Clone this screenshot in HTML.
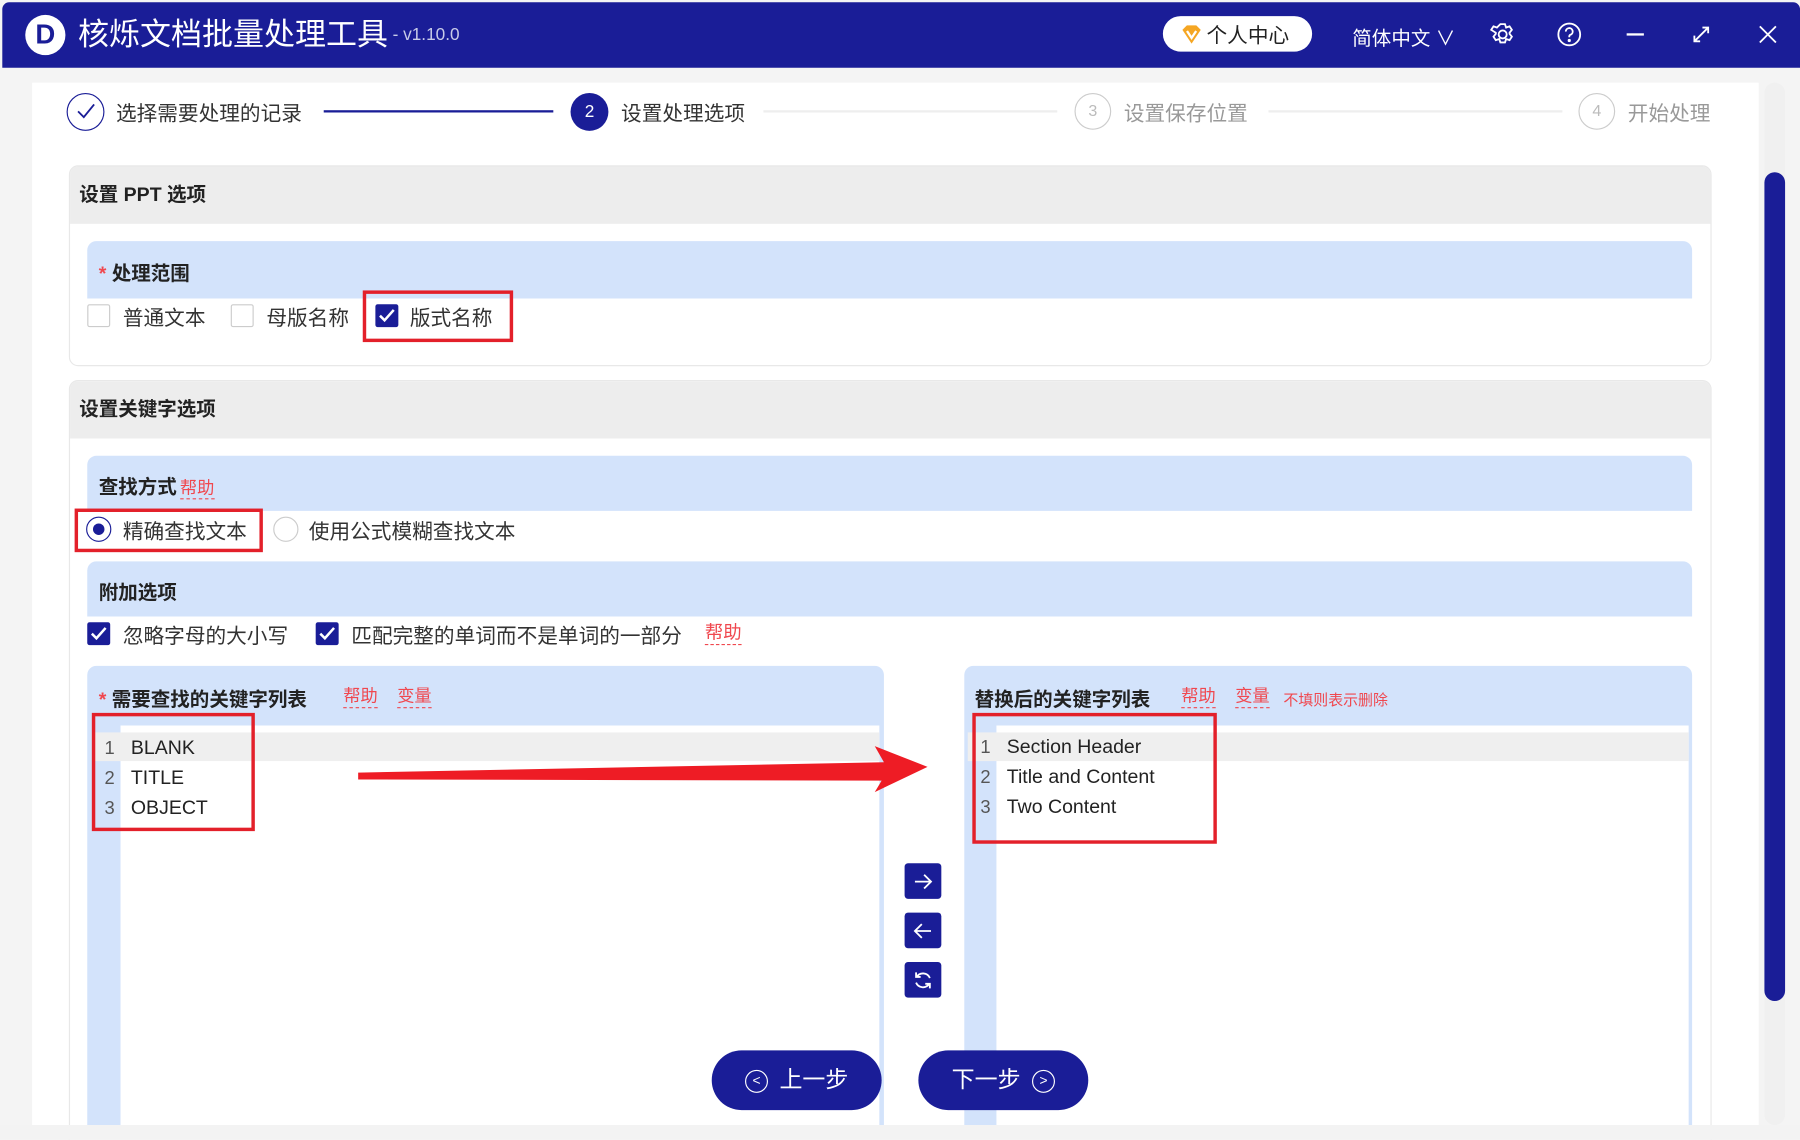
<!DOCTYPE html>
<html><head><meta charset="utf-8"><style>
*{box-sizing:border-box;margin:0;padding:0}
html,body{width:1800px;height:1140px;overflow:hidden;background:#f3f3f3}
body{font-family:"Liberation Sans","Noto Sans CJK SC",sans-serif;color:#333}
#w{position:absolute;left:0;top:0;width:1568px;height:993px;transform:scale(1.14796);transform-origin:0 0;background:#f4f4f4;overflow:hidden}
.a{position:absolute}
.tb{left:2px;top:2px;width:1566px;height:57px;background:#1a1d97;border-radius:6px 6px 0 0}
.w{color:#fff}
.step{font-size:18px;color:#333}
.circ{width:32px;height:32px;border-radius:50%;border:1.5px solid #ccc;text-align:center;line-height:29px;font-size:14px;color:#bbb}
.card{background:#fff;border:1px solid #e8e8e8;border-radius:8px;overflow:hidden}
.ch{background:#ededed;height:50px;font-weight:bold;font-size:17px;padding-left:8px;line-height:50px;color:#222}
.blue{background:#d3e3fb;border-radius:8px 8px 0 0}
.bt{font-weight:bold;font-size:17px;color:#222}
.cb{width:20px;height:20px;border:1px solid #ccc;border-radius:2px;background:#fff}
.cbk{width:20px;height:20px;border-radius:2px;background:#1a1d97}
.lbl{font-size:18px;color:#333}
.red{color:#f0484f}
.help{color:#f0484f;font-size:15px;border-bottom:1.5px dashed #f0484f;line-height:18px}
.rb{border:3px solid #e3202a}
.ln{font-size:17px;color:#222}
.num{font-size:16px;color:#555}
.sb{width:32px;height:31px;background:#1a1d97;border-radius:3px}
.pill{height:52px;width:148px;border-radius:26px;background:#1a1d97;color:#fff;font-size:20px;line-height:52px;text-align:center}
</style></head><body><div id="w">
<div class="a tb"></div>
<div class="a" style="left:22px;top:13px;width:35px;height:35px;border-radius:50%;background:#fff"></div>
<div class="a" style="left:22px;top:13px;width:35px;height:35px;text-align:center;line-height:35px;font-weight:bold;font-size:24px;color:#1a1d97">D</div>
<div class="a w" style="left:68px;top:13px;font-size:27px;line-height:34px">核烁文档批量处理工具</div>
<div class="a" style="left:342px;top:22px;font-size:15px;color:#c8cbe8">- v1.10.0</div>
<div class="a" style="left:1013px;top:14px;width:130px;height:31px;border-radius:16px;background:#fff"></div>
<svg class="a" style="left:1029px;top:22px" width="18" height="16" viewBox="0 0 18 16"><path d="M1 4 L5 0 H13 L17 4 L9 16Z" fill="#f5a623"/><path d="M5 5 L9 11 L13 5" stroke="#fff" stroke-width="2" fill="none"/></svg>
<div class="a" style="left:1051px;top:17px;font-size:18px;color:#222">个人中心</div>
<div class="a w" style="left:1178px;top:19px;font-size:17px">简体中文 ∨</div>
<svg class="a" style="left:1298px;top:19px" width="22" height="22" viewBox="0 0 22 22" fill="none" stroke="#fff" stroke-width="1.6"><circle cx="11" cy="11" r="3.5"/><path d="M9 2h4l1 3 3-1 2 3-2 2.5 0 1 2 2.5-2 3-3-1-1 3h-4l-1-3-3 1-2-3 2-2.5v-1L1 7l2-3 3 1z"/></svg>
<svg class="a" style="left:1356px;top:19px" width="22" height="22" viewBox="0 0 22 22" fill="none" stroke="#fff" stroke-width="1.6"><circle cx="11" cy="11" r="9.5"/><path d="M8 8.5a3 3 0 1 1 4 2.8c-1 .4-1 1-1 2.2"/><circle cx="11" cy="16.3" r=".6" fill="#fff"/></svg>
<div class="a" style="left:1417px;top:29px;width:15px;height:2px;background:#fff"></div>
<svg class="a" style="left:1474px;top:22px" width="16" height="16" viewBox="0 0 16 16" stroke="#fff" stroke-width="1.6" fill="none"><path d="M2 14 L14 2 M9 2h5v5 M2 9v5h5"/></svg>
<svg class="a" style="left:1532px;top:22px" width="16" height="16" viewBox="0 0 16 16" stroke="#fff" stroke-width="1.6"><path d="M1 1L15 15M15 1L1 15"/></svg>

<div class="a" style="left:28px;top:72px;width:1504px;height:908px;background:#fff"></div>

<div class="a" style="left:58px;top:81px;width:33px;height:33px;border-radius:50%;border:1.5px solid #1a1d97"></div>
<svg class="a" style="left:66px;top:89px" width="18" height="16"><path d="M2 8 L7 13 L16 2" stroke="#1a1d97" stroke-width="1.6" fill="none"/></svg>
<div class="a step" style="left:101px;top:85px">选择需要处理的记录</div>
<div class="a" style="left:282px;top:96px;width:200px;height:2px;background:#1a1d97"></div>
<div class="a" style="left:497px;top:81px;width:33px;height:33px;border-radius:50%;background:#1a1d97;color:#fff;text-align:center;line-height:33px;font-size:15px">2</div>
<div class="a step" style="left:541px;top:85px">设置处理选项</div>
<div class="a" style="left:665px;top:96px;width:256px;height:2px;background:#eee"></div>
<div class="a circ" style="left:936px;top:81px">3</div>
<div class="a step" style="left:979px;top:85px;color:#999">设置保存位置</div>
<div class="a" style="left:1105px;top:96px;width:256px;height:2px;background:#eee"></div>
<div class="a circ" style="left:1375px;top:81px">4</div>
<div class="a step" style="left:1418px;top:85px;color:#999">开始处理</div>

<div class="a card" style="left:60px;top:144px;width:1431px;height:175px"><div class="ch">设置 PPT 选项</div></div>
<div class="a blue" style="left:76px;top:210px;width:1398px;height:50px"></div>
<div class="a bt" style="left:86px;top:224px"><span class="red">* </span>处理范围</div>
<div class="a cb" style="left:76px;top:265px"></div><div class="a lbl" style="left:107px;top:263px">普通文本</div>
<div class="a cb" style="left:201px;top:265px"></div><div class="a lbl" style="left:232px;top:263px">母版名称</div>
<div class="a cbk" style="left:327px;top:265px"></div>
<svg class="a" style="left:330px;top:269px" width="14" height="12"><path d="M1 6 L5 10 L13 1" stroke="#fff" stroke-width="2.2" fill="none"/></svg>
<div class="a lbl" style="left:357px;top:263px">版式名称</div>
<div class="a rb" style="left:316px;top:253px;width:131px;height:45px"></div>

<div class="a card" style="left:60px;top:331px;width:1431px;height:700px"><div class="ch">设置关键字选项</div></div>
<div class="a blue" style="left:76px;top:397px;width:1398px;height:48px"></div>
<div class="a bt" style="left:86px;top:410px">查找方式 <span class="help" style="font-weight:normal;margin-left:-2px">帮助</span></div>
<div class="a" style="left:75px;top:450px;width:22px;height:22px;border-radius:50%;border:1.5px solid #1a1d97"></div>
<div class="a" style="left:81px;top:456px;width:10px;height:10px;border-radius:50%;background:#1a1d97"></div>
<div class="a lbl" style="left:107px;top:449px">精确查找文本</div>
<div class="a" style="left:238px;top:450px;width:22px;height:22px;border-radius:50%;border:1px solid #ccc"></div>
<div class="a lbl" style="left:269px;top:449px">使用公式模糊查找文本</div>
<div class="a rb" style="left:65px;top:443px;width:164px;height:38px"></div>
<div class="a blue" style="left:76px;top:489px;width:1398px;height:48px"></div>
<div class="a bt" style="left:86px;top:502px">附加选项</div>
<div class="a cbk" style="left:76px;top:542px"></div>
<svg class="a" style="left:79px;top:546px" width="14" height="12"><path d="M1 6 L5 10 L13 1" stroke="#fff" stroke-width="2.2" fill="none"/></svg>
<div class="a lbl" style="left:107px;top:540px">忽略字母的大小写</div>
<div class="a cbk" style="left:275px;top:542px"></div>
<svg class="a" style="left:278px;top:546px" width="14" height="12"><path d="M1 6 L5 10 L13 1" stroke="#fff" stroke-width="2.2" fill="none"/></svg>
<div class="a lbl" style="left:306px;top:540px">匹配完整的单词而不是单词的一部分</div>
<div class="a help" style="left:614px;top:543px;font-size:16px">帮助</div>

<div class="a" style="left:76px;top:580px;width:694px;height:400px;background:#d3e3fb;border-radius:8px 8px 0 0"></div>
<div class="a" style="left:105px;top:632px;width:661px;height:348px;background:#fff"></div>
<div class="a" style="left:80px;top:638px;width:686px;height:25px;background:#efefef"></div>
<div class="a bt" style="left:86px;top:595px"><span class="red">* </span>需要查找的关键字列表</div>
<div class="a help" style="left:299px;top:598px">帮助</div><div class="a help" style="left:346px;top:598px">变量</div>
<div class="a num" style="left:91px;top:640px;line-height:26px">1<br>2<br>3</div>
<div class="a ln" style="left:114px;top:639px;line-height:26px">BLANK<br>TITLE<br>OBJECT</div>
<div class="a rb" style="left:80px;top:621px;width:142px;height:103px"></div>

<div class="a" style="left:840px;top:580px;width:634px;height:400px;background:#d3e3fb;border-radius:8px 8px 0 0"></div>
<div class="a" style="left:868px;top:632px;width:603px;height:348px;background:#fff"></div>
<div class="a" style="left:843px;top:638px;width:628px;height:25px;background:#efefef"></div>
<div class="a bt" style="left:849px;top:595px">替换后的关键字列表</div>
<div class="a help" style="left:1029px;top:598px">帮助</div><div class="a help" style="left:1076px;top:598px">变量</div>
<div class="a red" style="left:1118px;top:599px;font-size:13px">不填则表示删除</div>
<div class="a num" style="left:854px;top:639px;line-height:26px">1<br>2<br>3</div>
<div class="a ln" style="left:877px;top:638px;line-height:26px">Section Header<br>Title and Content<br>Two Content</div>
<div class="a rb" style="left:847px;top:621px;width:213px;height:114px"></div>

<svg class="a" style="left:300px;top:640px" width="520" height="70"><path d="M12 33 L470 24 L462 10 L508 28 L462 50 L468 40 L12 39Z" fill="#ee1c25"/></svg>

<div class="a sb" style="left:788px;top:752px"></div>
<svg class="a" style="left:795px;top:759px" width="18" height="18" stroke="#fff" stroke-width="1.6" fill="none"><path d="M2 9H16M10 3L16 9L10 15"/></svg>
<div class="a sb" style="left:788px;top:795px"></div>
<svg class="a" style="left:795px;top:802px" width="18" height="18" stroke="#fff" stroke-width="1.6" fill="none"><path d="M16 9H2M8 3L2 9L8 15"/></svg>
<div class="a sb" style="left:788px;top:838px"></div>
<svg class="a" style="left:795px;top:845px" width="18" height="18" stroke="#fff" stroke-width="1.6" fill="none"><path d="M15 7A6.5 6.5 0 0 0 3.5 6M3 11A6.5 6.5 0 0 0 14.5 12M3 2v4h4M15 16v-4h-4"/></svg>

<div class="a pill" style="left:620px;top:915px"><span style="display:inline-block;width:20px;height:20px;border:1.5px solid #fff;border-radius:50%;font-size:12px;line-height:17px;vertical-align:2px;margin-right:10px">&lt;</span>上一步</div>
<div class="a pill" style="left:800px;top:915px">下一步<span style="display:inline-block;width:20px;height:20px;border:1.5px solid #fff;border-radius:50%;font-size:12px;line-height:17px;vertical-align:2px;margin-left:10px">&gt;</span></div>

<div class="a" style="left:1537px;top:72px;width:18px;height:908px;background:#f0f0f0;border-radius:9px"></div>
<div class="a" style="left:1537px;top:150px;width:18px;height:722px;background:#1a1d97;border-radius:9px"></div>
<div class="a" style="left:0;top:980px;width:1568px;height:13px;background:#f3f3f3"></div>
</div></body></html>
